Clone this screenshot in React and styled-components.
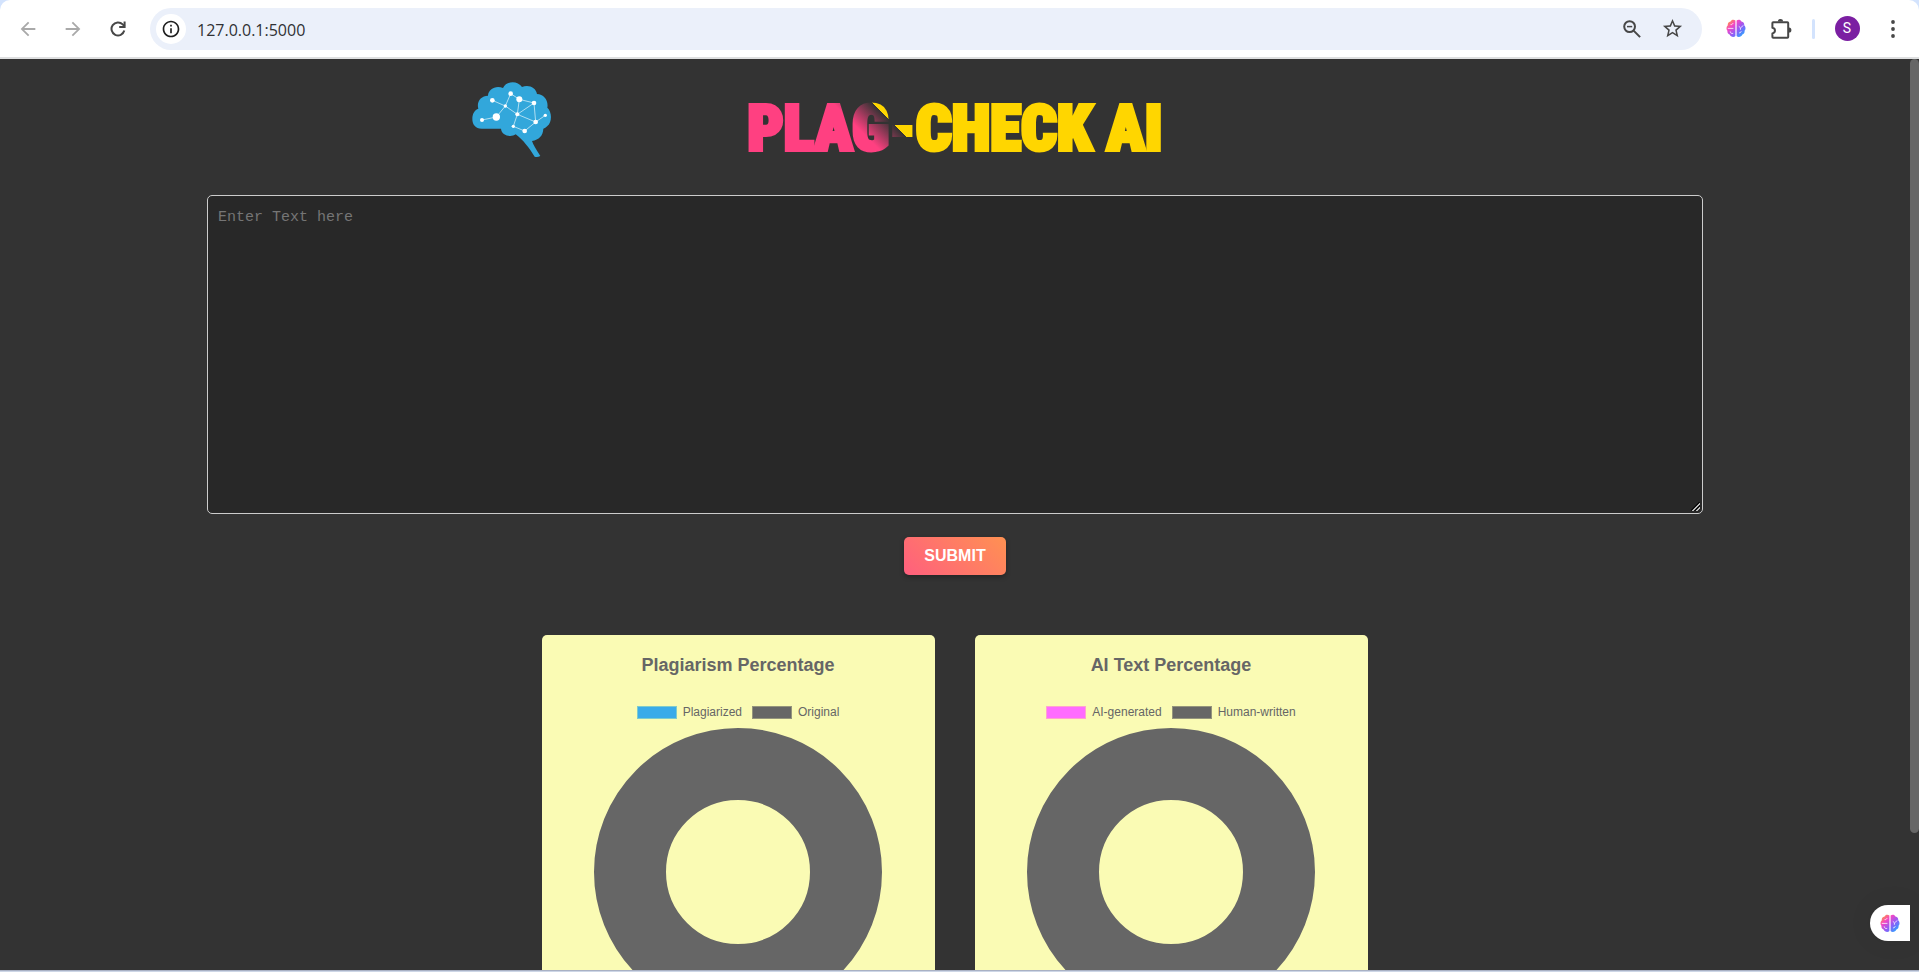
import React from "react";
import styled, { createGlobalStyle, css } from "styled-components";
import {
  MdArrowBack,
  MdArrowForward,
  MdInfoOutline,
  MdStarBorder,
} from "react-icons/md";

const GlobalStyle = createGlobalStyle`
  *, *::before, *::after { box-sizing: border-box; }
  body {
    margin: 0;
    background: #d3e3fd;
    font-family: "Liberation Sans", Arial, sans-serif;
  }
`;

const Window = styled.div`
  display: flex;
  flex-direction: column;
  height: 100vh;
  overflow: hidden;
`;

const Toolbar = styled.header`
  display: flex;
  align-items: center;
  flex: none;
  height: 59px;
  padding: 0 4px 0 5px;
  background: #fff;
  border-bottom: 2px solid #dedfe0;
  border-radius: 10px 10px 0 0;
`;

const IconButton = styled.button`
  display: flex;
  align-items: center;
  justify-content: center;
  flex: none;
  width: ${({ $width }) => $width || 45}px;
  height: 36px;
  padding: 0;
  border: 0;
  background: none;
  color: ${({ $muted }) => ($muted ? "#a9a9a9" : "#474747")};
`;

const AddressBar = styled.div`
  display: flex;
  align-items: center;
  flex: 1;
  height: 42px;
  margin: 0 11px 0 10px;
  padding: 0 10px 0 6px;
  border-radius: 21px;
  background: #ebf0fa;
`;

const SiteInfo = styled.button`
  display: flex;
  align-items: center;
  justify-content: center;
  flex: none;
  width: 30px;
  height: 30px;
  padding: 0;
  border: 0;
  border-radius: 50%;
  background: #fff;
  color: #1f1f1f;
`;

const AddressInput = styled.input`
  flex: 1;
  min-width: 0;
  height: 32px;
  padding: 2px 11px 0;
  border: 0;
  outline: 0;
  background: none;
  color: #303134;
  font: 16px "Open Sans", "Noto Sans", sans-serif;
`;

const Divider = styled.span`
  flex: none;
  width: 3px;
  height: 20px;
  margin: 0 9px;
  border-radius: 2px;
  background: #d3e3fd;
`;

const Avatar = styled.span`
  width: 25px;
  height: 25px;
  border-radius: 50%;
  background: #7b1fa2;
  color: #fff;
  font: 14px/25px Roboto, sans-serif;
  text-align: center;
`;

const Viewport = styled.div`
  position: relative;
  display: flex;
  flex: 1;
  min-height: 0;
  background: #333;
`;

const Page = styled.main`
  display: flex;
  flex-direction: column;
  align-items: center;
  flex: 1;
  overflow-y: auto;
  scrollbar-width: none;
`;

const ScrollTrack = styled.div`
  flex: none;
  width: 9px;
`;

const ScrollThumb = styled.div`
  height: 85%;
  border-radius: 5px;
  background: #666;
`;

const WindowEdge = styled.div`
  flex: none;
  height: 2px;
  border-top: 1px solid #a9b1c4;
  background: #cdd6e6;
`;

const Banner = styled.div`
  display: grid;
  grid-template-columns: 1fr auto 1fr;
  align-items: center;
  column-gap: 196px;
  flex: none;
  width: 80%;
  height: 136px;
`;

const LogoSlot = styled.div`
  display: flex;
  justify-content: flex-end;
`;

const Title = styled.h1`
  margin: 0;
  padding-top: 3px;
  font: 900 63px/64px "Roboto Condensed", "Liberation Sans", sans-serif;
  white-space: nowrap;
  color: transparent;
  -webkit-text-stroke: 4px transparent;
  background: linear-gradient(
    45deg,
    #ff4081 0,
    #ff4081 101px,
    #333 129px,
    #ffd600 129px
  );
  background-clip: text;
  -webkit-background-clip: text;
`;

const CheckForm = styled.form`
  display: flex;
  flex-direction: column;
  align-items: center;
  gap: 23px;
  width: 80%;
  padding: 0 16px;
`;

const TextInput = styled.textarea`
  display: block;
  width: 100%;
  height: 319px;
  padding: 12px 10px;
  border: 1px solid #ccc;
  border-radius: 5px;
  outline: 0;
  resize: vertical;
  background: #282828;
  color: #fff;
  font: 15px/20px "Liberation Mono", monospace;

  &::placeholder {
    color: #757575;
  }

  &::-webkit-resizer {
    background: linear-gradient(
        135deg,
        transparent 42%,
        #111 42%,
        #111 52%,
        #bbb 52%,
        #bbb 66%,
        #111 66%,
        #111 76%,
        #bbb 76%,
        #bbb 86%,
        transparent 86%
      )
      right 2px bottom 2px / 9px 9px no-repeat;
  }
`;

const SubmitButton = styled.button`
  height: 38px;
  padding: 0 20px;
  border: 0;
  border-radius: 5px;
  background: linear-gradient(45deg, #ff5f7e, #ff9152);
  box-shadow: 0 2px 5px rgba(0, 0, 0, 0.3);
  color: #fff;
  font: bold 16px/20px "Liberation Sans", Arial, sans-serif;
`;

const Charts = styled.section`
  display: flex;
  justify-content: center;
  gap: 40px;
  flex: none;
  padding: 60px 0 40px;
`;

const Card = styled.article`
  display: flex;
  flex-direction: column;
  align-items: center;
  width: 393px;
  padding: 20px 21px 20px 20px;
  border-radius: 5px;
  background: #fafbb4;
  color: #666;
`;

const CardTitle = styled.h2`
  margin: 0 0 29px;
  font-size: 18px;
  line-height: 20px;
`;

const Legend = styled.ul`
  display: flex;
  gap: 10px;
  margin: 0 0 8px;
  padding: 0;
  list-style: none;
  font-size: 12px;
  line-height: 16px;
`;

const LegendItem = styled.li`
  display: flex;
  align-items: center;
  gap: 6px;
`;

const swatches = {
  blue: css`
    background: #3aabe9;
    border-color: #7fcbcb;
  `,
  pink: css`
    background: #ff6cff;
    border-color: #ffa3cf;
  `,
  gray: css`
    background: #666;
    border-color: #94947c;
  `,
};

const Swatch = styled.span`
  width: 40px;
  height: 13px;
  border: 1px solid;
  ${({ $tone }) => swatches[$tone]}
`;

const Doughnut = styled.svg`
  display: block;
  width: 288px;
  height: 288px;
`;

const AssistantTab = styled.button`
  position: absolute;
  right: 9px;
  bottom: 29px;
  display: flex;
  align-items: center;
  justify-content: center;
  width: 40px;
  height: 36px;
  padding: 0;
  border: 0;
  border-radius: 18px 0 0 18px;
  background: #fff;
  box-shadow: 0 0 24px rgba(0, 0, 0, 0.08);
`;

function ReloadIcon() {
  return (
    <svg width="16" height="16" viewBox="0 0 16 16" fill="none" stroke="#474747" strokeWidth="2" aria-hidden="true">
      <path d="M14.3 9.6a6.5 6.5 0 1 1-1.6-6.2L14.6 5.3" />
      <path d="M14.6 0.6v5.4H9.2" />
    </svg>
  );
}

function ZoomOutIcon() {
  return (
    <svg width="18" height="18" viewBox="0 0 18 18" fill="none" stroke="#474747" strokeWidth="2" aria-hidden="true">
      <circle cx="6.6" cy="6.6" r="5.4" />
      <path d="M10.6 10.6l6.5 6.5" />
      <path d="M4 6.6h5.2" strokeWidth="1.5" />
    </svg>
  );
}

function PuzzleIcon() {
  return (
    <svg width="22" height="22" viewBox="0 0 22 22" aria-hidden="true">
      <path
        d="M3.2 4.2H17.4q.8 0 .8.8V19q0 .8-.8.8H3.2q-.8 0-.8-.8v-3.6c3.4-.6 3.4-5 0-5.6V5q0-.8.8-.8z"
        fill="none"
        stroke="#474747"
        strokeWidth="2"
        strokeLinejoin="round"
      />
      <path d="M7.8 3.5a2.6 2.4 0 0 1 5.2 0zM19 9.4a2.4 2.6 0 0 1 0 5.2z" fill="#474747" />
    </svg>
  );
}

function MoreIcon() {
  return (
    <svg width="4" height="18" viewBox="0 0 4 18" fill="#474747" aria-hidden="true">
      <circle cx="2" cy="2" r="1.9" />
      <circle cx="2" cy="9" r="1.9" />
      <circle cx="2" cy="16" r="1.9" />
    </svg>
  );
}

function ColorBrain({ id }) {
  return (
    <svg width="20" height="19" viewBox="0 0 20 19" aria-hidden="true">
      <defs>
        <linearGradient id={id} x1="0" y1="0" x2="1" y2="1">
          <stop offset="0.08" stopColor="#ff9a3c" />
          <stop offset="0.32" stopColor="#f545c4" />
          <stop offset="0.6" stopColor="#8f5cf7" />
          <stop offset="0.9" stopColor="#2aa5ff" />
        </linearGradient>
      </defs>
      <path
        fill={`url(#${id})`}
        d="M9.4 1.6C8.2.2 5.4.2 4.6 2.4 2.6 2.8 1.4 4.4 1.8 6.2.2 7.6 0 10.4 1.4 11.8c-.2 2 .8 3.4 2.2 3.8.8 2.4 4.4 3.2 5.8 1.4zM10.6 1.6c1.2-1.4 4-1.4 4.8.8 2 .4 3.2 2 2.8 3.8 1.6 1.4 1.8 4.2.4 5.6.2 2-.8 3.4-2.2 3.8-.8 2.4-4.4 3.2-5.8 1.4z"
      />
      <g fill="none" stroke="#fff" strokeOpacity="0.85" strokeWidth="0.9">
        <path d="M4.6 5.6c1.2.2 2.2-.4 2.4-1.6M1.8 9.4h5.6M4.2 12.4c0 1.6 1.4 2.4 3 2M12.8 7.4l1.8 1.4 2.8-2.4M14.4 9v1.8M13 13.8c1.2.2 2-.4 2.2-1.6" />
      </g>
    </svg>
  );
}

function BrainLogo() {
  const links =
    "M123 180L166 171L193 138L154 121M193 138L209 101L235 118L279 129L229 163L193 138M235 118L229 163L284 186L279 129M229 163L217 199L251 213L284 186L313 166";
  const nodes = [
    [123, 180, 6], [166, 171, 11], [193, 138, 5], [154, 121, 7],
    [209, 101, 7], [235, 118, 9], [279, 129, 7], [229, 163, 6],
    [284, 186, 7], [217, 199, 5], [251, 213, 7], [313, 166, 5],
  ];
  return (
    <svg width="80" height="90" viewBox="93 66 240 270" role="img" aria-label="Brain logo">
      <path
        fill="#32a7db"
        d="M122 206C103 206 94 193 94 177C94 160 102 149 112 146C106 125 120 107 141 107C142 88 164 75 186 84C196 62 230 61 243 81C262 72 285 82 288 102C309 103 323 121 319 143C334 156 333 188 319 198Q313 205 307 206C306 227 294 239 273 243Q277 256 298 288Q289 293 281 290C265 265 247 240 224 223C208 234 181 225 180 206Z"
      />
      <path d={links} fill="none" stroke="#c8e9f7" strokeWidth="2.5" />
      {nodes.map(([x, y, r]) => (
        <circle key={`${x}-${y}`} cx={x} cy={y} r={r} fill="#fff" />
      ))}
    </svg>
  );
}

function ChartCard({ title, items }) {
  return (
    <Card>
      <CardTitle>{title}</CardTitle>
      <Legend>
        {items.map(({ label, tone }) => (
          <LegendItem key={label}>
            <Swatch $tone={tone} />
            {label}
          </LegendItem>
        ))}
      </Legend>
      <Doughnut viewBox="0 0 288 288" role="img" aria-label={title}>
        <circle cx="144" cy="144" r="108" fill="none" stroke="#666" strokeWidth="72" />
      </Doughnut>
    </Card>
  );
}

const charts = [
  {
    title: "Plagiarism Percentage",
    items: [
      { label: "Plagiarized", tone: "blue" },
      { label: "Original", tone: "gray" },
    ],
  },
  {
    title: "AI Text Percentage",
    items: [
      { label: "AI-generated", tone: "pink" },
      { label: "Human-written", tone: "gray" },
    ],
  },
];

export default function App() {
  return (
    <>
      <GlobalStyle />
      <Window>
        <Toolbar>
          <IconButton $muted aria-label="Back"><MdArrowBack size={22} /></IconButton>
          <IconButton $muted aria-label="Forward"><MdArrowForward size={22} /></IconButton>
          <IconButton aria-label="Reload"><ReloadIcon /></IconButton>
          <AddressBar>
            <SiteInfo aria-label="Site information"><MdInfoOutline size={20} /></SiteInfo>
            <AddressInput aria-label="Address" defaultValue="127.0.0.1:5000" />
            <IconButton $width={40} aria-label="Zoom"><ZoomOutIcon /></IconButton>
            <IconButton $width={40} aria-label="Bookmark"><MdStarBorder size={23} /></IconButton>
          </AddressBar>
          <IconButton aria-label="Assistant"><ColorBrain id="brain-toolbar" /></IconButton>
          <IconButton aria-label="Extensions"><PuzzleIcon /></IconButton>
          <Divider />
          <IconButton $width={46} aria-label="Profile"><Avatar>S</Avatar></IconButton>
          <IconButton aria-label="Menu"><MoreIcon /></IconButton>
        </Toolbar>
        <Viewport>
          <Page>
            <Banner>
              <LogoSlot><BrainLogo /></LogoSlot>
              <Title>PLAG-CHECK AI</Title>
            </Banner>
            <CheckForm onSubmit={(event) => event.preventDefault()}>
              <TextInput aria-label="Text to check" placeholder="Enter Text here" />
              <SubmitButton type="submit">SUBMIT</SubmitButton>
            </CheckForm>
            <Charts>
              {charts.map((chart) => (
                <ChartCard key={chart.title} {...chart} />
              ))}
            </Charts>
          </Page>
          <ScrollTrack><ScrollThumb /></ScrollTrack>
          <AssistantTab aria-label="Open assistant"><ColorBrain id="brain-tab" /></AssistantTab>
        </Viewport>
        <WindowEdge />
      </Window>
    </>
  );
}
